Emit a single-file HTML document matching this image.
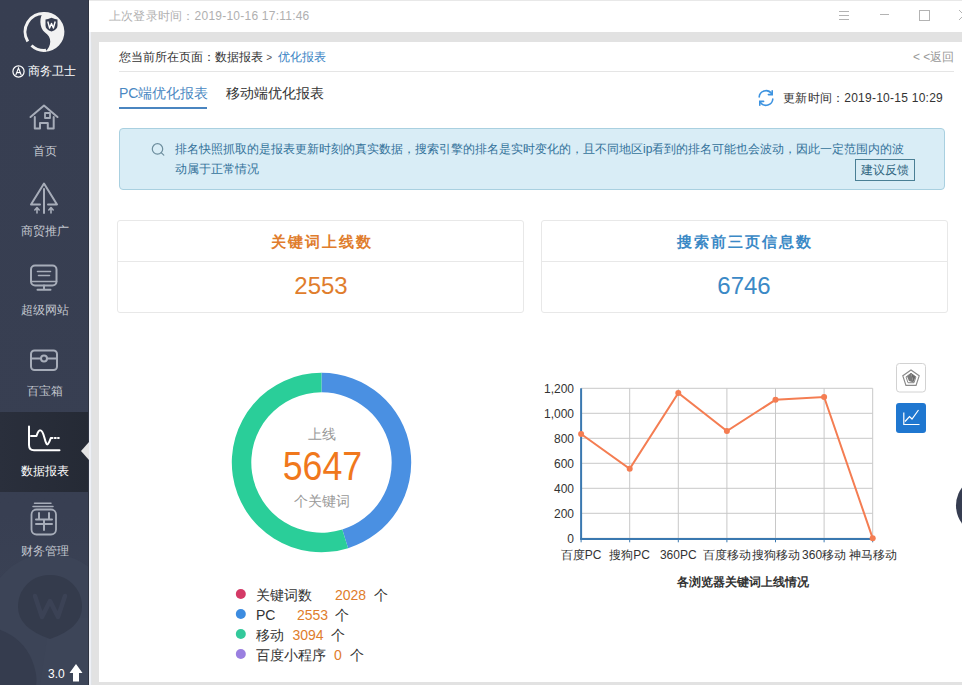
<!DOCTYPE html>
<html><head><meta charset="utf-8">
<style>
*{margin:0;padding:0;box-sizing:border-box;}
html,body{width:962px;height:685px;overflow:hidden;background:#e6e6e6;font-family:"Liberation Sans",sans-serif;font-size:12px;color:#333;}
.abs{position:absolute;white-space:nowrap;}
#side{position:absolute;left:0;top:0;width:89px;height:685px;background:#373e51;overflow:hidden;}
.mi{position:absolute;left:0;width:89px;text-align:center;color:#c3c7cf;font-size:12px;}
#top{position:absolute;left:89px;top:0;width:873px;height:32px;background:#fff;}
#gap{position:absolute;left:89px;top:32px;width:873px;height:653px;background:#e2e2e2;}
#gap:before{content:"";position:absolute;left:0;top:0;width:2px;height:653px;background:#eef0f6;}
#gap:after{content:"";position:absolute;left:2px;top:10px;width:1px;height:643px;background:#e0e3e6;}
#panel{position:absolute;left:99px;top:42px;width:863px;height:640px;background:#fff;}
</style></head><body>
<div id="side">
  <!-- watermark -->
  <svg class="abs" style="left:0;top:0" width="89" height="685" viewBox="0 0 89 685">
    <defs><linearGradient id="sg" x1="0" y1="0" x2="0" y2="1"><stop offset="0" stop-color="#373e51"/><stop offset="0.75" stop-color="#383f52"/><stop offset="1" stop-color="#3c4457"/></linearGradient></defs>
    <rect x="0" y="0" width="89" height="685" fill="url(#sg)"/>
    <circle cx="50" cy="618" r="64" fill="#3c4457"/>
    <path d="M50 618 L89 618 L89 685 L40 685 Z" fill="#3d4558"/>
    <path d="M-5 628 Q22 636 32 660 Q38 676 36 685 L-5 685 Z" fill="#353c4e"/>
    <path d="M50 575 Q60 575 68 580 Q82 590 82 607 Q82 628 50 639 Q18 628 18 607 Q18 590 32 580 Q40 575 50 575 Z" fill="#343b4c"/>
    <path d="M35 596 L42 617 L50 601 L58 617 L65 596" fill="none" stroke="#3b4255" stroke-width="4.5" stroke-linejoin="round" stroke-linecap="round"/>
    <rect x="88" y="0" width="1" height="685" fill="#2f3441"/>
  </svg>
  <div class="abs" style="left:0;top:412px;width:88px;height:80px;background:linear-gradient(90deg,#2a2f3c,#252a35)"></div>
  <!-- logo -->
  <svg class="abs" style="left:0;top:0" width="89" height="90" viewBox="0 0 89 90">
    <path d="M45 13.5 A18.4 18.4 0 0 0 27.8 41.5" fill="none" stroke="#f2f2f2" stroke-width="3"/>
    <path d="M31.5 45.5 A18.4 18.4 0 0 0 46 50.3" fill="none" stroke="#f2f2f2" stroke-width="3"/>
    <path d="M44 12 A19.9 19.9 0 0 1 45 51.8 C52 46, 52 37, 45 32.5 C39 28, 39 16, 44 12 Z" fill="#f2f2f2"/>
    <path d="M45.5 19.5 L48 19 L51.5 17.8 L55 19 L57.5 19.5 L57.5 25.5 Q57.5 29.5 51.5 31.5 Q45.5 29.5 45.5 25.5 Z" fill="#373e51"/>
    <path d="M47.8 21.5 L49.6 28 L51.5 23.5 L53.4 28 L55.2 21.5" fill="none" stroke="#fff" stroke-width="1.4" stroke-linejoin="round"/>
  </svg>
  <svg class="abs" style="left:12px;top:65px" width="13" height="13" viewBox="0 0 13 13">
    <circle cx="6.5" cy="6.5" r="5.6" fill="none" stroke="#fff" stroke-width="1.2"/>
    <path d="M3.8 10 L6.5 3 L9.2 10 M4.8 7.6 H8.2" fill="none" stroke="#fff" stroke-width="1.1"/>
  </svg>
  <div class="abs" style="left:28px;top:63px;color:#fff;font-size:12px;">商务卫士</div>

  <svg class="abs" style="left:0;top:0" width="89" height="685" viewBox="0 0 89 685" fill="none" stroke="#a7adb9" stroke-width="2" stroke-linejoin="round" stroke-linecap="round">
    <!-- home -->
    <path d="M30.5 117 L44 105.5 L57.5 117"/>
    <path d="M34.8 117 V128.5 H40 V123 H47.8 V128.5 H53.7 V117"/>
    <rect x="45" y="113" width="5" height="5" stroke-width="1.8"/>
    <!-- promote -->
    <path d="M40 204.5 H31 L44 183.5 L57 204.5 H48"/>
    <path d="M44 189 V213"/>
    <path d="M37 213 V208 M34.8 210 L37 207.5 L39.2 210" stroke-width="1.6"/>
    <path d="M51 213 V208 M48.8 210 L51 207.5 L53.2 210" stroke-width="1.6"/>
    <!-- website -->
    <rect x="31" y="265.5" width="25.5" height="20" rx="4"/>
    <path d="M31 281.5 H56.5" stroke-width="1.6"/>
    <path d="M37.5 271.5 H50.5 M38.5 275.5 H49.5" stroke-width="1.6"/>
    <path d="M44 285.5 V289.5 M37.5 289.8 H50.5"/>
    <!-- treasure box -->
    <rect x="31" y="350.5" width="26" height="19.5" rx="3.5"/>
    <path d="M31 358.5 H40.8 M47.2 358.5 H57"/>
    <circle cx="44" cy="358.5" r="3"/>
    <!-- finance -->
    <path d="M34.5 503.2 H51 M33 506.5 H53" stroke-width="1.5"/>
    <rect x="31.5" y="509.5" width="24.5" height="25" rx="5" stroke-width="1.8"/>
    <path d="M39 513 V519 M49 513 V519 M36 519.5 H52 M36 524 H52 M44 519.5 V530" stroke-width="2"/>
  </svg>
  <svg class="abs" style="left:0;top:0" width="89" height="685" viewBox="0 0 89 685" fill="none" stroke="#fff" stroke-width="2" stroke-linecap="round" stroke-linejoin="round">
    <path d="M29 426.5 V445 Q29 450.2 34 450.2 H59.5"/>
    <path d="M31 436 H36.5 Q38.5 430 40.4 430.3 Q42.5 430.5 44.5 438 Q46.5 446 48 444 Q49.5 442 50.8 438 H52.5"/>
    <path d="M54.8 438 H55.8 M58 438 H58.8"/>
  </svg>
  <div class="abs" style="left:81px;top:442px;width:0;height:0;border-top:9px solid transparent;border-bottom:9px solid transparent;border-right:8px solid #e4e4e4"></div>

  <div class="mi" style="top:143px">首页</div>
  <div class="mi" style="top:223px">商贸推广</div>
  <div class="mi" style="top:302px">超级网站</div>
  <div class="mi" style="top:383px">百宝箱</div>
  <div class="mi" style="top:463px;color:#fff">数据报表</div>
  <div class="mi" style="top:543px">财务管理</div>
  <div class="abs" style="left:48px;top:667px;color:#fff;font-size:12px">3.0</div>
  <svg class="abs" style="left:68px;top:663px" width="16" height="20" viewBox="0 0 16 20">
    <path d="M8 1 L14.5 10 H11 V18.5 H5 V10 H1.5 Z" fill="#fff"/>
  </svg>
</div>
<div id="top">
  <div class="abs" style="left:20px;top:8px;color:#b0b0b0;font-size:12px;letter-spacing:0.23px">上次登录时间：2019-10-16 17:11:46</div>

  <svg class="abs" style="left:731px;top:0" width="142" height="32" viewBox="820 0 142 32" fill="none" stroke="#b3b3b3" stroke-width="1" shape-rendering="crispEdges">
    <path d="M839 11.5 H849 M839 15.5 H849 M839 19.5 H849"/>
    <path d="M880 14.5 H889"/>
    <rect x="919.5" y="10.5" width="10" height="10"/>
    <path d="M959 10 L969 20 M969 10 L959 20" shape-rendering="auto"/>
  </svg>
  <div class="abs" style="left:0;top:0;width:873px;height:1px;background:#e8e8e8"></div>
</div>
<div id="gap"></div>
<div id="panel">
  <div class="abs" style="left:20px;top:7px;color:#333">您当前所在页面：数据报表 <span style="font-size:10px;color:#555">&gt;</span> <span style="color:#3a83c4;margin-left:2px">优化报表</span></div>
  <div class="abs" style="left:814px;top:7px;color:#999">&lt; &lt;返回</div>
  <div class="abs" style="left:20px;top:29px;width:835px;height:1px;background:#e5e5e5"></div>

  <div class="abs" style="left:20px;top:43px;color:#4a88c2;font-size:14px">PC端优化报表</div>
  <div class="abs" style="left:20px;top:65px;width:88px;height:2px;background:#4a85c0"></div>
  <div class="abs" style="left:127px;top:43px;color:#333;font-size:14px">移动端优化报表</div>
  <svg class="abs" style="left:657px;top:46px" width="20" height="20" viewBox="0 0 20 20" fill="none" stroke="#3d93e0" stroke-width="1.6" stroke-linecap="round">
    <path d="M3.2 9 A6.8 6.8 0 0 1 15.5 5.5"/>
    <path d="M16.2 2.8 V6.6 H12.4"/>
    <path d="M16.8 11 A6.8 6.8 0 0 1 4.5 14.5"/>
    <path d="M3.8 17.2 V13.4 H7.6"/>
  </svg>
  <div class="abs" style="left:684px;top:48px;color:#333;font-size:12px;letter-spacing:0.25px">更新时间：2019-10-15 10:29</div>

  <div class="abs" style="left:20px;top:86px;width:826px;height:62px;background:#d9edf6;border:1px solid #a9d0e0;border-radius:4px"></div>
  <svg class="abs" style="left:51px;top:100px" width="16" height="16" viewBox="0 0 16 16" fill="none" stroke="#6d8e9e" stroke-width="1.2" stroke-linecap="round">
    <circle cx="7.5" cy="6.9" r="5.2"/>
    <path d="M11.2 10.6 L13.8 13.2"/>
  </svg>
  <div class="abs" style="left:76px;top:98.5px;color:#33729a;font-size:12px">排名快照抓取的是报表更新时刻的真实数据，搜索引擎的排名是实时变化的，且不同地区ip看到的排名可能也会波动，因此一定范围内的波</div>
  <div class="abs" style="left:76px;top:118.5px;color:#33729a;font-size:12px">动属于正常情况</div>
  <div class="abs" style="left:756px;top:117px;width:60px;height:22px;border:1px solid #4a7f95;color:#2f6580;font-size:12px;text-align:center;line-height:20px">建议反馈</div>

  <div class="abs" style="left:18px;top:178px;width:407px;height:93px;border:1px solid #e8e8e8;border-radius:3px"></div>
  <div class="abs" style="left:18px;top:219px;width:407px;height:1px;background:#e8e8e8"></div>
  <div class="abs" style="left:19px;top:191px;width:406px;text-align:center;color:#e07d2c;font-size:15px;font-weight:bold;letter-spacing:2px;text-indent:2px">关键词上线数</div>
  <div class="abs" style="left:19px;top:230px;width:406px;text-align:center;color:#e07d2c;font-size:24px">2553</div>

  <div class="abs" style="left:442px;top:178px;width:407px;height:93px;border:1px solid #e8e8e8;border-radius:3px"></div>
  <div class="abs" style="left:442px;top:219px;width:407px;height:1px;background:#e8e8e8"></div>
  <div class="abs" style="left:442px;top:191px;width:406px;text-align:center;color:#3b89c6;font-size:15px;font-weight:bold;letter-spacing:2px;text-indent:2px">搜索前三页信息数</div>
  <div class="abs" style="left:442px;top:230px;width:406px;text-align:center;color:#3b89c6;font-size:24px">6746</div>
</div>

<svg class="abs" style="left:0;top:0" width="962" height="685" viewBox="0 0 962 685" font-family="Liberation Sans, sans-serif">
  <path d="M321.5 372.8 A89.7 89.7 0 0 1 348.09 548.17 L342.31 529.54 A70.2 70.2 0 0 0 321.5 392.3 Z" fill="#4a90e2"/>
  <path d="M348.09 548.17 A89.7 89.7 0 1 1 321.5 372.8 L321.5 392.3 A70.2 70.2 0 1 0 342.31 529.54 Z" fill="#2ace99"/>
  <text x="322" y="439" text-anchor="middle" font-size="14" fill="#999">上线</text>
  <text x="322.4" y="480" text-anchor="middle" font-size="40.5" fill="#f0781c" textLength="79.5" lengthAdjust="spacingAndGlyphs">5647</text>
  <text x="322" y="506" text-anchor="middle" font-size="14" fill="#999">个关键词</text>
  <circle cx="240.8" cy="594" r="5" fill="#d43a66"/>
  <circle cx="240.8" cy="614" r="5" fill="#3c8ce0"/>
  <circle cx="240.8" cy="634" r="5" fill="#33c99b"/>
  <circle cx="240.8" cy="654" r="5" fill="#9a7fe0"/>
  <g font-size="14" fill="#333">
    <text x="256" y="600">关键词数</text><text x="335" y="600" fill="#e07d2c">2028</text><text x="373.5" y="600">个</text>
    <text x="256" y="620">PC</text><text x="297" y="620" fill="#e07d2c">2553</text><text x="335" y="620">个</text>
    <text x="256" y="640">移动</text><text x="292.5" y="640" fill="#e07d2c">3094</text><text x="331" y="640">个</text>
    <text x="256" y="660">百度小程序</text><text x="334" y="660" fill="#e07d2c">0</text><text x="350" y="660">个</text>
  </g>
  <line x1="581.1" y1="538.3" x2="872.7" y2="538.3" stroke="#c8c8c8" stroke-width="1"/><line x1="581.1" y1="513.3" x2="872.7" y2="513.3" stroke="#c8c8c8" stroke-width="1"/><line x1="581.1" y1="488.3" x2="872.7" y2="488.3" stroke="#c8c8c8" stroke-width="1"/><line x1="581.1" y1="463.3" x2="872.7" y2="463.3" stroke="#c8c8c8" stroke-width="1"/><line x1="581.1" y1="438.3" x2="872.7" y2="438.3" stroke="#c8c8c8" stroke-width="1"/><line x1="581.1" y1="413.3" x2="872.7" y2="413.3" stroke="#c8c8c8" stroke-width="1"/><line x1="581.1" y1="388.3" x2="872.7" y2="388.3" stroke="#c8c8c8" stroke-width="1"/><line x1="629.7" y1="388.3" x2="629.7" y2="538.3" stroke="#c8c8c8" stroke-width="1"/><line x1="678.3" y1="388.3" x2="678.3" y2="538.3" stroke="#c8c8c8" stroke-width="1"/><line x1="726.9" y1="388.3" x2="726.9" y2="538.3" stroke="#c8c8c8" stroke-width="1"/><line x1="775.5" y1="388.3" x2="775.5" y2="538.3" stroke="#c8c8c8" stroke-width="1"/><line x1="824.1" y1="388.3" x2="824.1" y2="538.3" stroke="#c8c8c8" stroke-width="1"/><line x1="872.7" y1="388.3" x2="872.7" y2="538.3" stroke="#c8c8c8" stroke-width="1"/>
  <g font-size="12" fill="#333"><text x="574" y="542.8" text-anchor="end">0</text><text x="574" y="517.8" text-anchor="end">200</text><text x="574" y="492.8" text-anchor="end">400</text><text x="574" y="467.8" text-anchor="end">600</text><text x="574" y="442.8" text-anchor="end">800</text><text x="574" y="417.8" text-anchor="end">1,000</text><text x="574" y="392.8" text-anchor="end">1,200</text><text x="581.1" y="559" text-anchor="middle">百度PC</text><text x="629.7" y="559" text-anchor="middle">搜狗PC</text><text x="678.3" y="559" text-anchor="middle">360PC</text><text x="726.9" y="559" text-anchor="middle">百度移动</text><text x="775.5" y="559" text-anchor="middle">搜狗移动</text><text x="824.1" y="559" text-anchor="middle">360移动</text><text x="872.7" y="559" text-anchor="middle">神马移动</text></g>
  <line x1="581.1" y1="388.29999999999995" x2="581.1" y2="539.0" stroke="#3a78b0" stroke-width="2"/>
  <line x1="580.1" y1="539" x2="872.7" y2="539" stroke="#3a78b0" stroke-width="2"/>
  <line x1="581.1" y1="538.3" x2="581.1" y2="542.3" stroke="#3a78b0" stroke-width="1"/><line x1="629.7" y1="538.3" x2="629.7" y2="542.3" stroke="#3a78b0" stroke-width="1"/><line x1="678.3" y1="538.3" x2="678.3" y2="542.3" stroke="#3a78b0" stroke-width="1"/><line x1="726.9" y1="538.3" x2="726.9" y2="542.3" stroke="#3a78b0" stroke-width="1"/><line x1="775.5" y1="538.3" x2="775.5" y2="542.3" stroke="#3a78b0" stroke-width="1"/><line x1="824.1" y1="538.3" x2="824.1" y2="542.3" stroke="#3a78b0" stroke-width="1"/><line x1="872.7" y1="538.3" x2="872.7" y2="542.3" stroke="#3a78b0" stroke-width="1"/>
  <path d="M581.1 434.0 L629.7 468.8 L678.3 393.0 L726.9 431.0 L775.5 399.8 L824.1 397.0 L872.7 538.3" fill="none" stroke="#f47d52" stroke-width="2"/>
  <circle cx="581.1" cy="434.0" r="3" fill="#f47d52"/><circle cx="629.7" cy="468.8" r="3" fill="#f47d52"/><circle cx="678.3" cy="393.0" r="3" fill="#f47d52"/><circle cx="726.9" cy="431.0" r="3" fill="#f47d52"/><circle cx="775.5" cy="399.8" r="3" fill="#f47d52"/><circle cx="824.1" cy="397.0" r="3" fill="#f47d52"/><circle cx="872.7" cy="538.3" r="3" fill="#f47d52"/>
  <text x="743" y="586" text-anchor="middle" font-size="12" font-weight="bold" fill="#333">各浏览器关键词上线情况</text>
  <rect x="896.5" y="363.5" width="29" height="28.5" rx="3" fill="#fff" stroke="#d2d2d2"/>
  <polygon points="911.00,369.90 919.18,375.84 916.05,385.46 905.95,385.46 902.82,375.84" fill="none" stroke="#8a8a8a" stroke-width="1.2"/>
  <polygon points="911.00,373.30 915.95,376.89 914.06,382.71 907.94,382.71 906.05,376.89" fill="none" stroke="#8a8a8a" stroke-width="1"/>
  <path d="M911 373 L915.5 376.8 L913.5 382.5 Z" fill="#6a6a6a"/>
  <path d="M911 373 L907 376.5 L909 381 L913.5 382.5 Z" fill="#7a7a7a"/>
  <rect x="896" y="403" width="30" height="30" rx="3" fill="#1f77d0"/>
  <path d="M903.8 412.5 L903.8 424.5 L919.5 424.5" fill="none" stroke="#fff" stroke-width="1.2"/>
  <path d="M905 421.5 L909.5 416.5 L912 419 L918.5 410" fill="none" stroke="#fff" stroke-width="1.2"/>
  <circle cx="986" cy="505.5" r="30" fill="#363d51"/>
</svg>
</body></html>
